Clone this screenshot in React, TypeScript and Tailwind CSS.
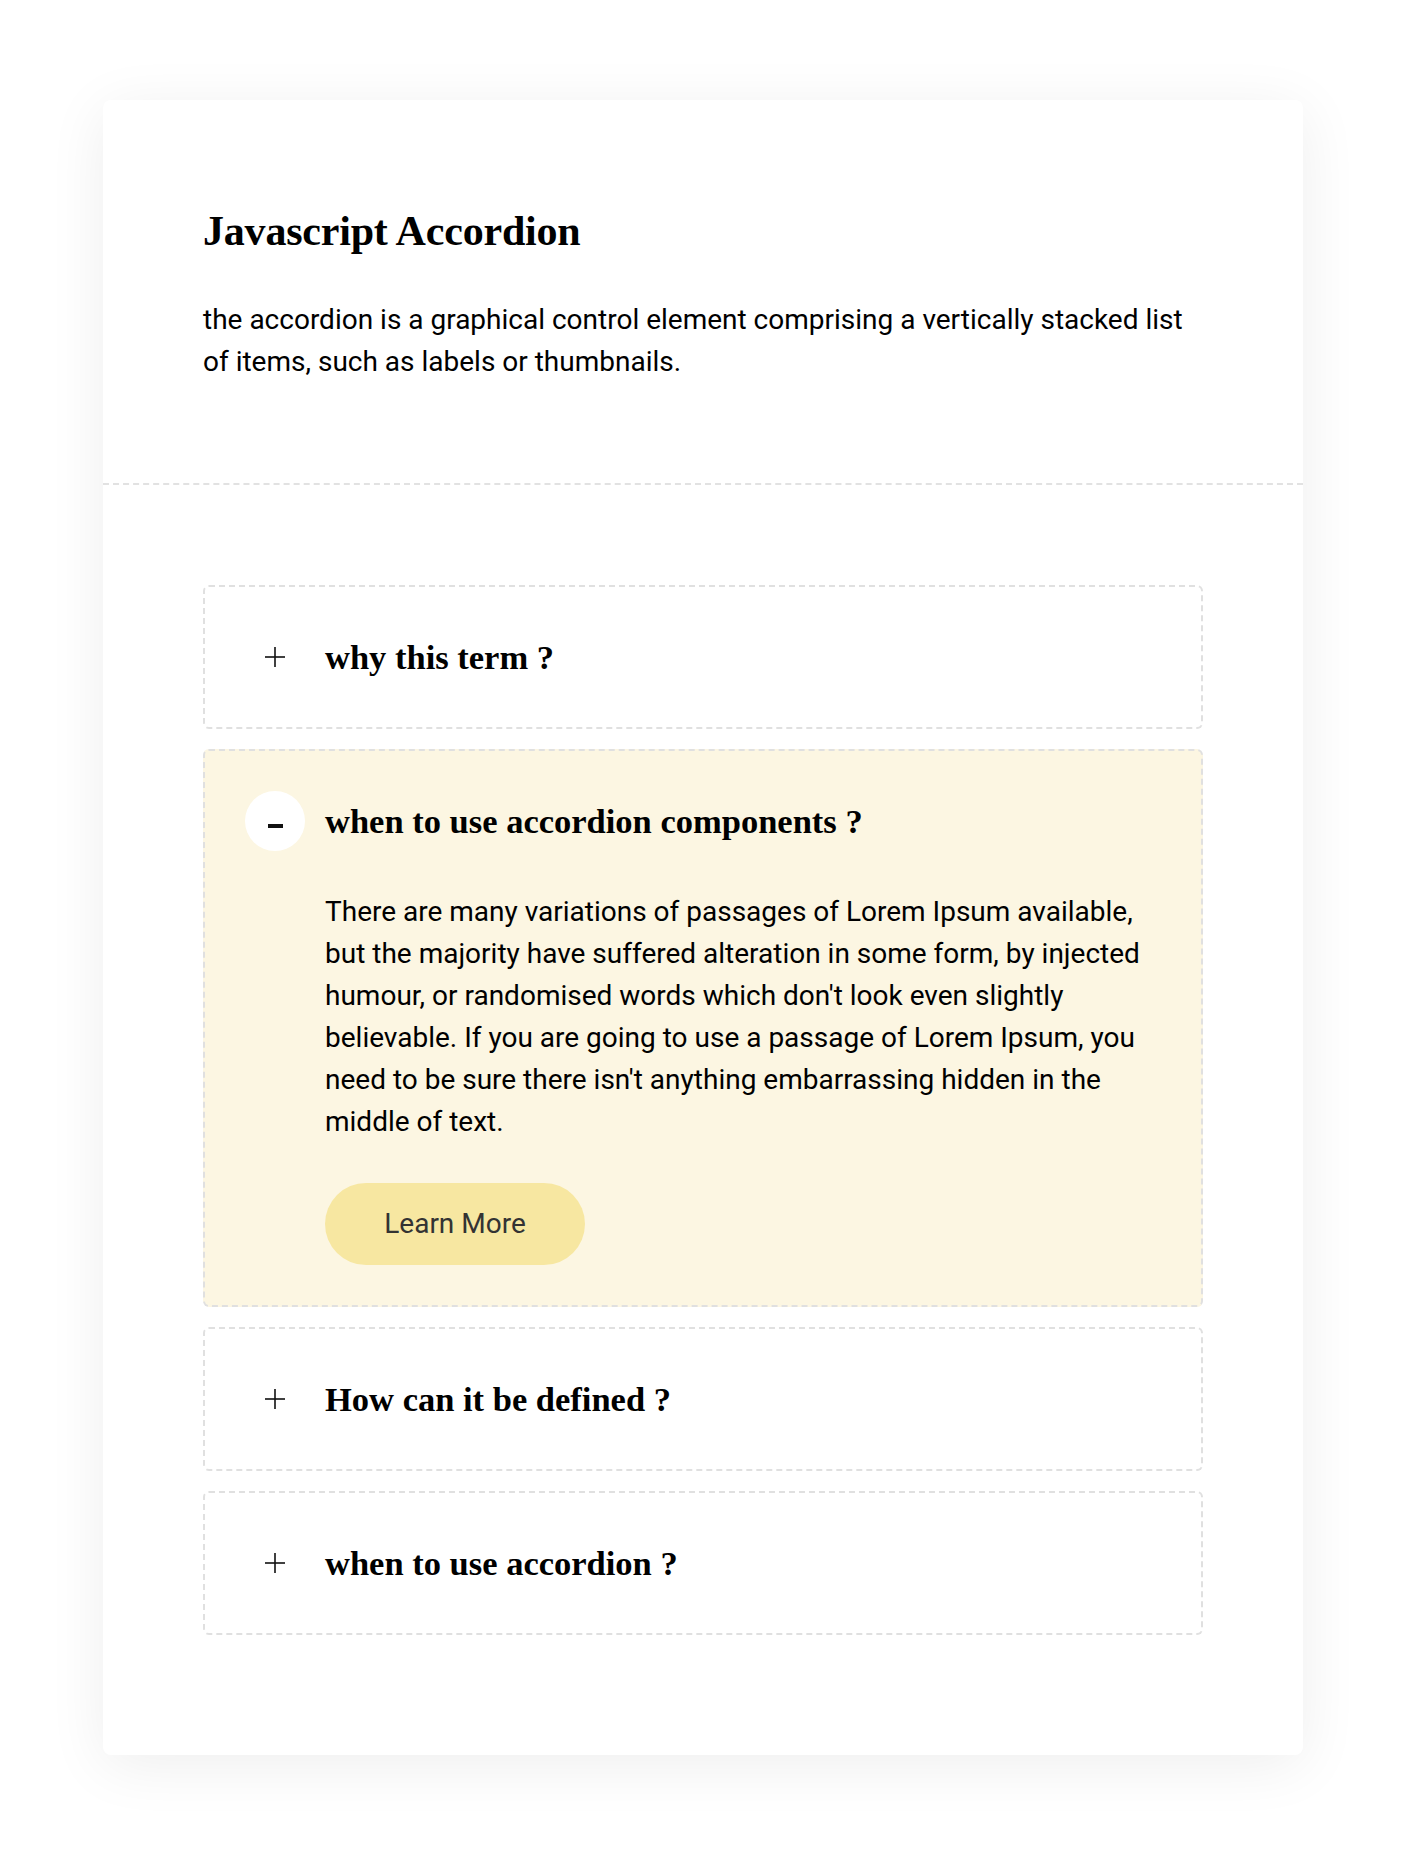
import React, { useState } from "react";

const items = [
  { title: "why this term ?" },
  { title: "when to use accordion components ?" },
  { title: "How can it be defined ?" },
  { title: "when to use accordion ?" },
];

const body =
  "There are many variations of passages of Lorem Ipsum available, but the majority have suffered alteration in some form, by injected humour, or randomised words which don't look even slightly believable. If you are going to use a passage of Lorem Ipsum, you need to be sure there isn't anything embarrassing hidden in the middle of text.";

function PlusIcon() {
  return (
    <svg width="22" height="22" viewBox="0 0 22 22" className="block">
      <line x1="11" y1="1" x2="11" y2="21" stroke="#111" strokeWidth="1.6" />
      <line x1="1" y1="11" x2="21" y2="11" stroke="#111" strokeWidth="1.6" />
    </svg>
  );
}

export default function App() {
  const [open, setOpen] = useState<number>(1);
  return (
    <div className="min-h-[1850px] w-full bg-white pt-[100px] font-['Roboto',sans-serif]">
      <div className="mx-auto w-[1200px] rounded-[8px] bg-white shadow-[0_10px_60px_rgba(0,0,0,0.07)]">
        <div className="border-b-2 border-dashed border-[#e2e2e2] px-[100px] pt-[100px] pb-[100px]">
          <h1 className="font-['Liberation_Serif',serif] text-[42px] leading-[62px] font-bold text-black tracking-[-0.2px]">
            Javascript Accordion
          </h1>
          <p className="mt-[37px] text-[28px] leading-[42px] text-black">
            the accordion is a graphical control element comprising a vertically stacked list of items, such as labels or thumbnails.
          </p>
        </div>
        <div className="flex flex-col gap-[20px] px-[100px] pt-[100px] pb-[120px]">
          {items.map((it, i) => {
            const isOpen = open === i;
            return (
              <div
                key={i}
                className={`rounded-[6px] border-2 border-dashed border-[#e0e0e0] p-[40px] ${isOpen ? "bg-[#fcf6e2]" : "bg-white"}`}
              >
                <button
                  type="button"
                  onClick={() => setOpen(isOpen ? -1 : i)}
                  className="flex h-[60px] w-full items-center gap-[20px] text-left"
                >
                  <span
                    className={`flex h-[60px] w-[60px] shrink-0 items-center justify-center rounded-full ${isOpen ? "bg-white" : ""}`}
                  >
                    {isOpen ? (
                      <span className="mt-[9px] block h-[4px] w-[15px] bg-[#111]" />
                    ) : (
                      <PlusIcon />
                    )}
                  </span>
                  <span className="font-['Liberation_Serif',serif] text-[34.5px] leading-[60px] font-bold text-black">
                    {it.title}
                  </span>
                </button>
                {isOpen && (
                  <div className="pl-[80px] pt-[40px]">
                    <p className="text-[28px] leading-[42px] text-black">{body}</p>
                    <button
                      type="button"
                      className="mt-[40px] flex h-[82px] w-[260px] items-center justify-center rounded-full bg-[#f7e7a1] text-[28px] text-[#333]"
                    >
                      Learn More
                    </button>
                  </div>
                )}
              </div>
            );
          })}
        </div>
      </div>
    </div>
  );
}
